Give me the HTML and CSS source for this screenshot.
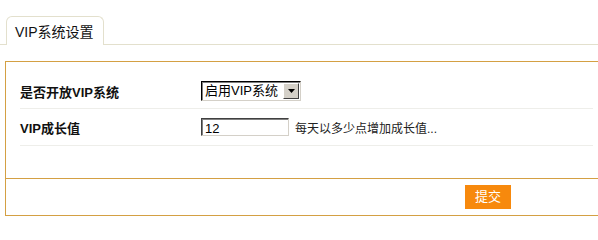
FILE: index.html
```html
<!DOCTYPE html>
<html>
<head>
<meta charset="utf-8">
<link rel="stylesheet" href="styles.css">
</head>
<body>
<div class="tabs">
  <div class="tab">VIP系统设置</div>
</div>
<div class="panel">
  <div class="rows">
    <div class="row">
      <div class="label">是否开放VIP系统</div>
      <div class="field">
        <span class="select"><span class="select-text">启用VIP系统</span><span class="arrow"><svg width="9" height="5" viewBox="0 0 9 5"><path d="M1 0H8L4.5 4Z" fill="#000"/></svg></span></span>
      </div>
    </div>
    <div class="row">
      <div class="label">VIP成长值</div>
      <div class="field">
        <span class="input">12</span>
        <span class="hint">每天以多少点增加成长值...</span>
      </div>
    </div>
  </div>
  <div class="footer">
    <span class="btn">提交</span>
  </div>
</div>
</body>
</html>
```
FILE: styles.css
```css
html, body {
  margin: 0;
  padding: 0;
  background: #fff;
  overflow: hidden;
  font-family: "Liberation Sans", "Noto Sans CJK SC", sans-serif;
  color: #000;
}
.tabs {
  padding: 16px 0 0 6px;
  border-bottom: 1px solid #e3e0cd;
  height: 28px;
}
.tab {
  box-sizing: border-box;
  width: 98px;
  height: 29px;
  border: 1px solid #e3e0cd;
  border-bottom: none;
  border-radius: 6px 6px 0 0;
  background: #fff;
  font-size: 14px;
  line-height: 26px;
  padding: 2px 0 0 8px;
  color: #111;
}
.panel {
  margin: 16px -10px 0 5px;
  border: 1px solid #d4a043;
  height: 153px;
  display: flex;
  flex-direction: column;
}
.rows {
  padding: 12px 14px 0 14px;
  height: 104px;
  border-bottom: 1px solid #d4a043;
}
.row {
  display: flex;
  align-items: center;
  border-bottom: 1px solid #eeeeea;
  height: 34px;
}
.row + .row {
  height: 36px;
}
.label {
  width: 181px;
  font-size: 13px;
  font-weight: bold;
  color: #111;
}
.field {
  display: flex;
  align-items: center;
}
.select {
  box-sizing: border-box;
  display: inline-flex;
  align-items: center;
  width: 100px;
  height: 20px;
  border: 1px solid #000;
  border-right-color: #d4d0c8;
  border-bottom-color: #d4d0c8;
  box-shadow: inset 1px 1px 0 #808080;
  background: #fff;
  font-size: 13px;
  padding-left: 3px;
}
.select-text {
  flex: 1;
  line-height: 18px;
}
.arrow {
  box-sizing: border-box;
  width: 16px;
  height: 16px;
  margin-right: 1px;
  background: #d4d0c8;
  border: 1px solid;
  border-color: #fff #404040 #404040 #fff;
  display: flex;
  align-items: center;
  justify-content: center;
}
.input {
  box-sizing: border-box;
  width: 88px;
  height: 18px;
  border: 1px solid #404040;
  border-right-color: #d4d0c8;
  border-bottom-color: #d4d0c8;
  box-shadow: inset 1px 1px 0 #808080;
  font-size: 13px;
  line-height: 18px;
  padding-left: 3px;
  padding-top: 1px;
}
.hint {
  margin-left: 6px;
  font-size: 12px;
  color: #222;
}
.footer {
  flex: 1;
  display: flex;
  align-items: center;
  padding-left: 459px;
}
.btn {
  width: 46px;
  height: 24px;
  background: #f7890d;
  color: #fff;
  font-size: 13px;
  line-height: 24px;
  text-align: center;
}
```
